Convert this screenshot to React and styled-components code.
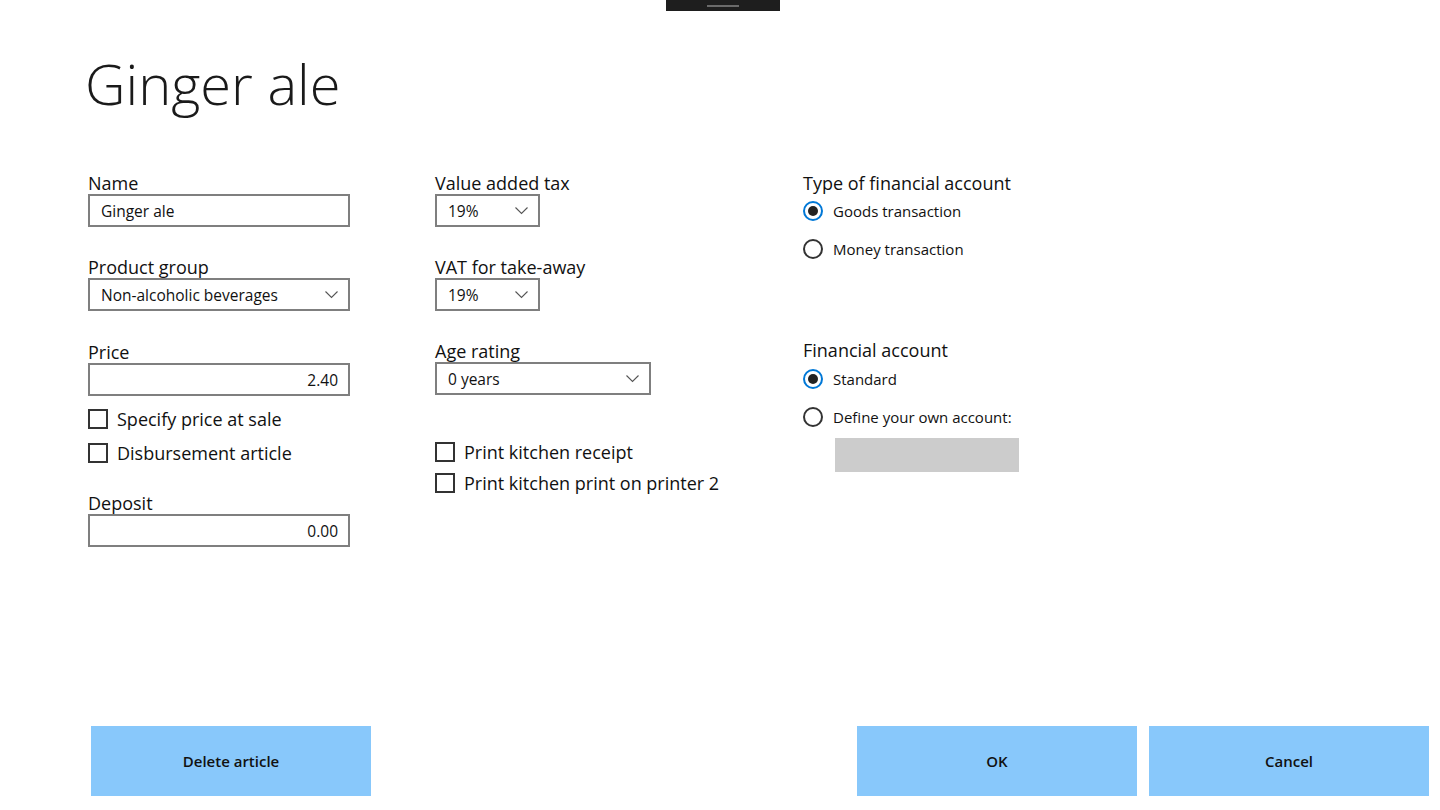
import React from 'react';
import styled, { createGlobalStyle } from 'styled-components';

const GlobalStyle = createGlobalStyle`
  html, body {
    margin: 0;
    padding: 0;
    background: #ffffff;
  }
  body {
    font-family: "Open Sans", "Noto Sans", sans-serif;
    color: #000;
  }
`;

const Page = styled.div`
  width: 1440px;
  height: 810px;
  display: flex;
  flex-direction: column;
  overflow: hidden;
`;

const Handle = styled.div`
  width: 114px;
  height: 11px;
  margin-left: 666px;
  background: #1e1e1e;
  display: flex;
  justify-content: center;
  align-items: center;
  &::after {
    content: '';
    width: 32px;
    height: 2px;
    background: #6a6a6a;
  }
`;

const Title = styled.h1`
  margin: 32px 0 0 85px;
  font-size: 56px;
  font-weight: 300;
  line-height: 80px;
  color: #1a1a1a;
`;

const Form = styled.div`
  display: grid;
  grid-template-columns: 347px 368px 400px;
  padding-left: 88px;
  margin-top: 49px;
`;

const Column = styled.div`
  display: flex;
  flex-direction: column;
`;

const Field = styled.div`
  display: flex;
  flex-direction: column;
  margin-top: ${p => p.$top || 0}px;
`;

const Label = styled.div`
  font-size: 18px;
  line-height: 22px;
  height: 22px;
  margin-top: ${p => p.$top || 0}px;
  color: #111;
  white-space: nowrap;
`;

const Box = styled.div`
  box-sizing: border-box;
  width: ${p => p.$width}px;
  height: 33px;
  border: 2px solid #7f7f7f;
  display: flex;
  align-items: center;
  justify-content: ${p => (p.$right ? 'flex-end' : 'space-between')};
  padding: 0 10px 0 11px;
  font-size: 15.5px;
  color: #111;
`;

const Chevron = () => (
  <svg width="13" height="8" viewBox="0 0 13 8">
    <polyline points="0.5,0.5 6.5,6.5 12.5,0.5" fill="none" stroke="#555" strokeWidth="1.1" />
  </svg>
);

const CheckRow = styled.div`
  display: flex;
  align-items: center;
  gap: 9px;
  height: 20px;
  margin-top: ${p => p.$top || 0}px;
  font-size: 18px;
  color: #111;
  white-space: nowrap;
`;

const CheckSquare = styled.span`
  box-sizing: border-box;
  width: 20px;
  height: 20px;
  border: 2px solid #333;
  flex: none;
`;

const RadioRow = styled.div`
  display: flex;
  align-items: center;
  gap: 10px;
  height: 20px;
  margin-top: ${p => p.$top || 0}px;
  font-size: 15px;
  color: #111;
  white-space: nowrap;
`;

const RadioCircle = styled.span`
  box-sizing: border-box;
  width: 20px;
  height: 20px;
  border-radius: 50%;
  border: 2px solid ${p => (p.$on ? '#0078d7' : '#333')};
  display: flex;
  align-items: center;
  justify-content: center;
  flex: none;
  &::after {
    content: '';
    width: 10px;
    height: 10px;
    border-radius: 50%;
    background: ${p => (p.$on ? '#222' : 'transparent')};
  }
`;

const AccountBox = styled.div`
  width: 184px;
  height: 34px;
  margin: 11px 0 0 32px;
  background: #cccccc;
`;

const Spacer = styled.div`
  flex: 1;
`;

const ButtonBar = styled.div`
  display: flex;
  padding: 0 11px 14px 91px;
  gap: 12px;
`;

const Button = styled.button`
  width: 280px;
  height: 70px;
  border: none;
  background: #88c8fb;
  font-family: "Open Sans", "Noto Sans", sans-serif;
  font-size: 15px;
  font-weight: 600;
  color: #111;
  margin-left: ${p => (p.$push ? 'auto' : '0')};
`;

const Select = ({ width, value }) => (
  <Box $width={width}>
    <span>{value}</span>
    <Chevron />
  </Box>
);

export default function App() {
  return (
    <Page>
      <GlobalStyle />
      <Handle />
      <Title>Ginger ale</Title>
      <Form>
        <Column>
          <Field>
            <Label>Name</Label>
            <Box $width={262}>Ginger ale</Box>
          </Field>
          <Field $top={29}>
            <Label>Product group</Label>
            <Select width={262} value="Non-alcoholic beverages" />
          </Field>
          <Field $top={30}>
            <Label>Price</Label>
            <Box $width={262} $right>2.40</Box>
          </Field>
          <CheckRow $top={13}>
            <CheckSquare />
            Specify price at sale
          </CheckRow>
          <CheckRow $top={14}>
            <CheckSquare />
            Disbursement article
          </CheckRow>
          <Field $top={29}>
            <Label>Deposit</Label>
            <Box $width={262} $right>0.00</Box>
          </Field>
        </Column>
        <Column>
          <Field>
            <Label>Value added tax</Label>
            <Select width={105} value="19%" />
          </Field>
          <Field $top={29}>
            <Label>VAT for take-away</Label>
            <Select width={105} value="19%" />
          </Field>
          <Field $top={29}>
            <Label>Age rating</Label>
            <Select width={216} value="0 years" />
          </Field>
          <CheckRow $top={47}>
            <CheckSquare />
            Print kitchen receipt
          </CheckRow>
          <CheckRow $top={11}>
            <CheckSquare />
            Print kitchen print on printer 2
          </CheckRow>
        </Column>
        <Column>
          <Label>Type of financial account</Label>
          <RadioRow $top={7}>
            <RadioCircle $on />
            Goods transaction
          </RadioRow>
          <RadioRow $top={18}>
            <RadioCircle />
            Money transaction
          </RadioRow>
          <Label $top={80}>Financial account</Label>
          <RadioRow $top={8}>
            <RadioCircle $on />
            Standard
          </RadioRow>
          <RadioRow $top={18}>
            <RadioCircle />
            Define your own account:
          </RadioRow>
          <AccountBox />
        </Column>
      </Form>
      <Spacer />
      <ButtonBar>
        <Button>Delete article</Button>
        <Button $push>OK</Button>
        <Button>Cancel</Button>
      </ButtonBar>
    </Page>
  );
}
